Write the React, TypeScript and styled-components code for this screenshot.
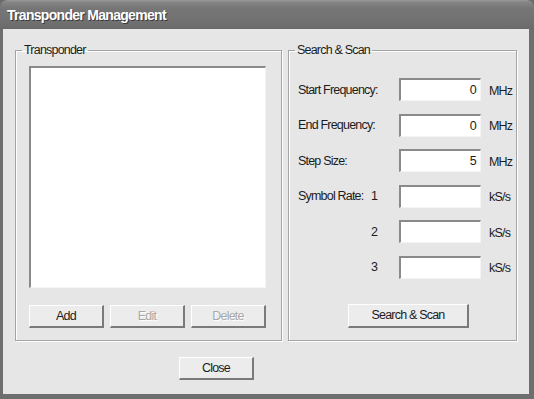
import React from "react";
import styled, { createGlobalStyle } from "styled-components";

const GlobalStyle = createGlobalStyle`
  html, body {
    margin: 0;
    padding: 0;
    background: #6c6c6c;
  }
  body {
    font-family: "Liberation Sans", Arial, sans-serif;
  }
`;

const Window = styled.div`
  width: 534px;
  height: 399px;
  box-sizing: border-box;
  display: flex;
  flex-direction: column;
  background: #6e6e6e;
  border-radius: 7px 7px 0 0;
  padding: 0 5px 5px 3px;
  overflow: hidden;
`;

const TitleBar = styled.div`
  height: 29px;
  margin: 0 -5px 0 -3px;
  padding-left: 7px;
  display: flex;
  align-items: center;
  background: linear-gradient(#9a9a9a 0px, #868686 2px, #767676 8px, #707070 22px, #6a6a6a 29px);
  border-radius: 7px 7px 0 0;
  color: #ffffff;
  font-weight: bold;
  font-size: 14px;
  letter-spacing: -0.7px;
  text-shadow: 1px 1px 0 #3a3a3a;
`;

const Client = styled.div`
  flex: 1;
  background: #e6e6e6;
  padding: 14px 12px 0 12px;
  display: flex;
  flex-direction: column;
  color: #1c1c1c;
  font-size: 12.5px;
  letter-spacing: -0.8px;
`;

const GroupsRow = styled.div`
  display: flex;
  gap: 6px;
`;

const Group = styled.fieldset<{ $width?: number; $padLeft: number }>`
  margin: 0;
  box-sizing: border-box;
  height: 298px;
  ${(p) => (p.$width ? `width: ${p.$width}px;` : "flex: 1;")}
  border: 1px solid #a4a4a4;
  box-shadow: inset 1px 1px 0 #ffffff, 1px 1px 0 #ffffff;
  padding: 9px 15px 12px ${(p) => p.$padLeft}px;
  display: flex;
  flex-direction: column;
  min-width: 0;
`;

const Legend = styled.legend<{ $offset: number }>`
  padding: 0 2px;
  margin-left: ${(p) => p.$offset}px;
  line-height: 14px;
`;

const ListBox = styled.div`
  flex: 1;
  background: #ffffff;
  border-top: 2px solid #8a8a8a;
  border-left: 2px solid #8a8a8a;
  border-right: 1px solid #f4f4f4;
  border-bottom: 1px solid #f4f4f4;
`;

const ButtonRow = styled.div`
  margin-top: 17px;
  display: flex;
  justify-content: space-between;
`;

const Button = styled.button<{ $width?: number; $height?: number }>`
  width: ${(p) => p.$width ?? 75}px;
  height: ${(p) => p.$height ?? 23}px;
  box-sizing: border-box;
  padding: 0;
  background: #ececec;
  border-top: 1px solid #ffffff;
  border-left: 1px solid #ffffff;
  border-right: 2px solid #7a7a7a;
  border-bottom: 2px solid #7a7a7a;
  font-family: inherit;
  font-size: 12.5px;
  letter-spacing: -0.8px;
  color: #1c1c1c;
  &:disabled {
    color: #a8a8a8;
    text-shadow: 1px 1px 0 #ffffff;
  }
`;

const FieldGrid = styled.div`
  margin-top: 12px;
  display: grid;
  grid-template-columns: 101px 82px auto;
  grid-auto-rows: 23px;
  row-gap: 12.6px;
  align-items: center;
`;

const FieldLabel = styled.div`
  display: flex;
  align-items: center;
`;

const LabelText = styled.span`
  width: 73px;
  white-space: nowrap;
`;

const Input = styled.div`
  height: 23px;
  box-sizing: border-box;
  background: #ffffff;
  border-top: 2px solid #8a8a8a;
  border-left: 2px solid #8a8a8a;
  border-right: 1px solid #f4f4f4;
  border-bottom: 1px solid #f4f4f4;
  padding-right: 4px;
  display: flex;
  align-items: center;
  justify-content: flex-end;
`;

const Unit = styled.span`
  padding: 2px 0 0 8px;
`;

const ScanRow = styled.div`
  margin-top: 25px;
  padding-left: 50px;
`;

const Footer = styled.div`
  margin-top: 16px;
  padding-left: 164px;
`;

const fields = [
  { label: "Start Frequency:", num: "", value: "0", unit: "MHz" },
  { label: "End Frequency:", num: "", value: "0", unit: "MHz" },
  { label: "Step Size:", num: "", value: "5", unit: "MHz" },
  { label: "Symbol Rate:", num: "1", value: "", unit: "kS/s" },
  { label: "", num: "2", value: "", unit: "kS/s" },
  { label: "", num: "3", value: "", unit: "kS/s" },
];

export default function App() {
  return (
    <>
      <GlobalStyle />
      <Window>
        <TitleBar>Transponder Management</TitleBar>
        <Client>
          <GroupsRow>
            <Group $width={267} $padLeft={13}>
              <Legend $offset={-7}>Transponder</Legend>
              <ListBox />
              <ButtonRow>
                <Button>Add</Button>
                <Button disabled>Edit</Button>
                <Button disabled>Delete</Button>
              </ButtonRow>
            </Group>
            <Group $padLeft={9}>
              <Legend $offset={-3}>Search &amp; Scan</Legend>
              <FieldGrid>
                {fields.map((f, i) => (
                  <React.Fragment key={i}>
                    <FieldLabel>
                      <LabelText>{f.label}</LabelText>
                      <span>{f.num}</span>
                    </FieldLabel>
                    <Input>{f.value}</Input>
                    <Unit>{f.unit}</Unit>
                  </React.Fragment>
                ))}
              </FieldGrid>
              <ScanRow>
                <Button $width={121} $height={24}>
                  Search &amp; Scan
                </Button>
              </ScanRow>
            </Group>
          </GroupsRow>
          <Footer>
            <Button>Close</Button>
          </Footer>
        </Client>
      </Window>
    </>
  );
}
